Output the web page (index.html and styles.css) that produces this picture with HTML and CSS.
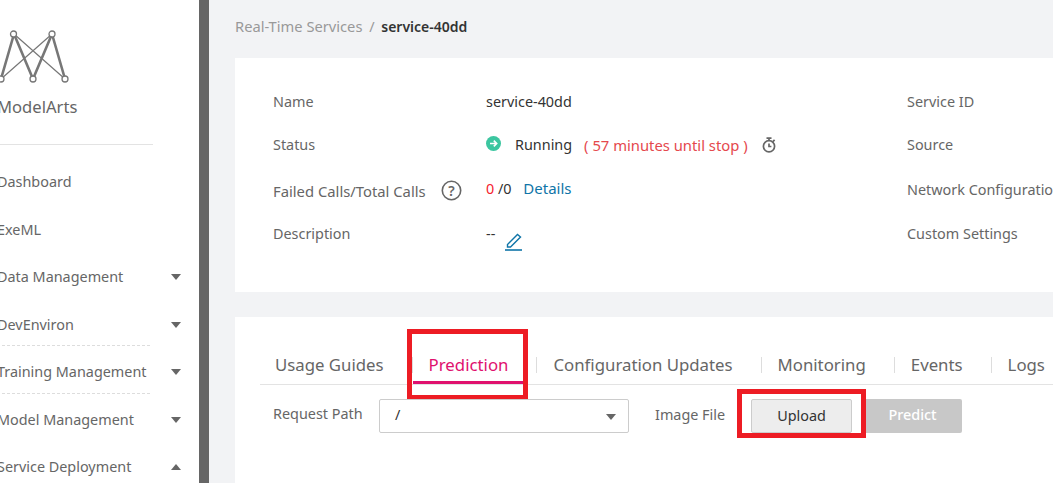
FILE: index.html
```html
<!DOCTYPE html>
<html>
  <head>
    <title>ModelArts - service-40dd</title>
    <link rel="stylesheet" href="styles.css">
  </head>

  <body>
    <aside class="sidebar">
      <div class="brand">
        <svg class="brand-logo" width="70" height="50" viewBox="0 0 70 50">
          <g fill="none" stroke="#777">
            <path stroke-width="1.2" d="M14 5 65 50M52 5 1 50" />
            <path stroke-width="2.6" d="M14 5 1 50M14 5 33 50M52 5 33 50M52 5 65 50" />
            <g stroke-width="1.3" fill="#fff">
              <circle cx="13.5" cy="5" r="3" />
              <circle cx="52" cy="5" r="3" />
              <circle cx="1" cy="50" r="3" />
              <circle cx="33" cy="50" r="3" />
              <circle cx="65" cy="50" r="3" />
            </g>
          </g>
        </svg>
        <div class="brand-name">ModelArts</div>
      </div>
      <ul class="nav">
        <li class="nav-item">Dashboard</li>
        <li class="nav-item">ExeML</li>
        <li class="nav-item">Data Management<span class="caret"></span></li>
        <li class="nav-item nav-item-dashed">DevEnviron<span class="caret"></span></li>
        <li class="nav-item nav-item-dashed">Training Management<span class="caret"></span></li>
        <li class="nav-item">Model Management<span class="caret"></span></li>
        <li class="nav-item">Service Deployment<span class="caret caret-up"></span></li>
      </ul>
    </aside>
    <div class="scrollbar"></div>

    <main class="content">
      <div class="breadcrumb">
        <span class="crumb">Real-Time Services</span>
        <span class="crumb-sep">/</span>
        <span class="crumb-current">service-40dd</span>
      </div>

      <section class="card info-card">
        <div class="info-grid">
          <span class="label">Name</span>
          <span class="value">service-40dd</span>
          <span class="label">Service ID</span>

          <span class="label">Status</span>
          <span class="value status">
            <svg class="status-icon" width="15" height="15" viewBox="0 0 15 15">
              <circle cx="7.5" cy="7.5" r="7.5" fill="#3cc6a0" />
              <path d="M4 7.5h6.5M7.8 4.6l2.9 2.9-2.9 2.9" fill="none" stroke="#fff" stroke-width="1.6" />
            </svg>
            <span>Running</span>
            <span class="countdown">( 57 minutes until stop )</span>
            <svg class="timer-icon" width="16" height="16" viewBox="0 0 16 16">
              <g fill="none" stroke="#666" stroke-width="1.7">
                <circle cx="8" cy="9.3" r="5.6" />
                <path d="M5.5 1.2h5M8 1.2v2.4M13.6 2.8l-1.7 1.8M8 6.5v3h2.4" />
              </g>
            </svg>
          </span>
          <span class="label">Source</span>

          <span class="label label-help">
            <span class="label-wide">Failed Calls/Total Calls</span>
            <svg width="21" height="21" viewBox="0 0 21 21">
              <circle cx="10.5" cy="10.5" r="9.2" fill="none" stroke="#666" stroke-width="1.6" />
              <text class="help-mark" x="10.5" y="15.5" text-anchor="middle">?</text>
            </svg>
          </span>
          <span class="value calls"><span class="zero">0</span> /0 <a class="link">Details</a></span>
          <span class="label">Network Configuration</span>

          <span class="label">Description</span>
          <span class="value desc">
            --
            <svg class="edit-icon" width="20" height="20" viewBox="0 0 20 20">
              <path d="M3.5 13.5 13.5 3.5l3 2.5L6.5 16H3.5z" fill="none" stroke="#0f75a8" stroke-width="1.4" />
              <path d="M1 19h17" stroke="#0f75a8" stroke-width="1.6" />
            </svg>
          </span>
          <span class="label">Custom Settings</span>
        </div>
      </section>

      <section class="card tabs-card">
        <div class="tabs">
          <span class="tab">Usage Guides</span>
          <span class="tab tab-active">Prediction</span>
          <span class="tab">Configuration Updates</span>
          <span class="tab">Monitoring</span>
          <span class="tab">Events</span>
          <span class="tab">Logs</span>
          <span class="mark mark-tab"></span>
        </div>
        <div class="form-row">
          <span class="label request-label">Request Path</span>
          <div class="select">
            <span class="select-text">/</span>
            <span class="caret"></span>
          </div>
          <span class="label image-label">Image File</span>
          <button class="btn btn-upload">Upload</button>
          <button class="btn btn-predict">Predict</button>
          <span class="mark mark-upload"></span>
        </div>
      </section>
    </main>
  </body>
</html>
```

FILE: styles.css
```css
:root {
  --text: #666;
  --text-dark: #333;
  --line: #e3e3e3;
}

html,
body {
  height: 100%;
  overflow: hidden;
}

body {
  margin: 0;
  display: flex;
  font-family: "Noto Sans", "Open Sans", sans-serif;
  font-size: 14.4px;
  color: var(--text);
  background-color: #fff;
}

/* sidebar */
.sidebar {
  width: 199px;
  flex-shrink: 0;
  overflow: hidden;
}

.brand {
  margin-right: 46px;
  padding-top: 29px;
  height: 115px;
  border-bottom: 1px solid var(--line);
}
.brand-logo {
  display: block;
  overflow: visible;
}
.brand-name {
  margin-top: 16px;
  margin-left: -3px;
  font-size: 16.6px;
  line-height: 24px;
}

.nav {
  list-style: none;
  margin: 13px 0 0 -3px;
  padding: 0;
}
.nav-item {
  position: relative;
  height: 47.5px;
  line-height: 47px;
  white-space: nowrap;
}
.nav-item-dashed::after {
  content: "";
  position: absolute;
  left: 0;
  right: 49px;
  bottom: 2px;
  border-bottom: 1px dashed #ddd;
}

.caret {
  position: absolute;
  left: 174px;
  top: 21px;
  border-left: 5px solid transparent;
  border-right: 5px solid transparent;
  border-top: 6px solid #666;
}
.caret-up {
  border-top: 0;
  border-bottom: 6px solid #666;
}

.scrollbar {
  width: 10px;
  flex-shrink: 0;
  background-color: #666;
}

/* main column */
.content {
  flex: 1;
  min-width: 0;
  padding-left: 26px;
  background-color: #f2f3f5;
}

.breadcrumb {
  height: 58px;
  line-height: 52px;
  white-space: nowrap;
  color: #999;
}
.crumb {
  font-size: 14.7px;
}
.crumb-sep {
  margin: 0 3px;
}
.crumb-current {
  font-size: 14px;
  font-weight: 600;
  color: var(--text-dark);
}

.card {
  background-color: #fff;
}

.info-card {
  box-sizing: border-box;
  height: 234px;
  margin-bottom: 25px;
  padding: 20px 0 0 38px;
  overflow: hidden;
}

.info-grid {
  display: grid;
  grid-template-columns: 213px 421px 300px;
  grid-template-rows: 47px 39px 51px 37px;
  align-items: center;
  white-space: nowrap;
}

.value {
  color: var(--text-dark);
}

.label-help {
  display: flex;
  align-items: center;
  gap: 15px;
  margin-top: 2px;
}
.label-wide {
  font-size: 14.8px;
}
.help-mark {
  font-size: 14px;
  font-weight: 600;
  fill: #666;
}

.status {
  display: flex;
  align-items: center;
}
.status-icon {
  margin: -2px 14px 0 0;
}
.countdown {
  margin-left: 12px;
  color: #e5484d;
  font-size: 14.8px;
}
.timer-icon {
  margin-left: 13px;
}

.calls {
  margin-top: -3px;
}
.zero {
  color: #f5222d;
}
.link {
  margin-left: 8px;
  color: #0f75a8;
  font-size: 15px;
}

.desc {
  display: flex;
  align-items: center;
  gap: 9px;
}
.edit-icon {
  margin-top: 14px;
}

.tabs-card {
  height: 166px;
  padding-left: 25px;
}

.tabs {
  position: relative;
  display: flex;
  box-sizing: border-box;
  height: 68px;
  border-bottom: 1px solid var(--line);
  white-space: nowrap;
  font-size: 16.8px;
  line-height: 96px;
}
.tab {
  position: relative;
  padding: 0 15px 0 16px;
  margin-left: 14px;
}
.tab:first-child {
  margin-left: 0;
  padding-left: 15px;
}
.tab + .tab::before {
  content: "";
  position: absolute;
  left: -1px;
  top: 40px;
  height: 16px;
  border-left: 1px solid #ddd;
}
.tab-active {
  color: #e0106e;
  border-bottom: 3px solid #e0106e;
}

.form-row {
  position: relative;
  display: flex;
  align-items: center;
  height: 62px;
  padding-left: 13px;
}
.request-label {
  width: 106px;
  margin-top: -5px;
}
.select {
  position: relative;
  display: flex;
  align-items: center;
  box-sizing: border-box;
  width: 250px;
  height: 34px;
  padding-left: 15px;
  border: 1px solid #ccc;
  border-radius: 2px;
  color: var(--text-dark);
}
.select-text {
  margin-top: -3px;
}
.select .caret {
  left: 226px;
  top: 14px;
}
.image-label {
  margin-left: 26px;
  width: 96px;
  margin-top: -4px;
}

.btn {
  height: 34px;
  width: 101px;
  padding: 0;
  border-radius: 2px;
  font: inherit;
}
.btn-upload {
  border: 1px solid #ccc;
  background-color: #ededed;
  color: var(--text-dark);
  padding-bottom: 2px;
}
.btn-predict {
  margin-left: 11px;
  width: 99px;
  border: 0;
  background-color: #c8c8c8;
  color: #fff;
  font-weight: 500;
  padding-bottom: 3px;
}

/* red annotation boxes drawn on top of the screenshot */
.mark {
  position: absolute;
  box-sizing: border-box;
  border: 5px solid #ed1c24;
}
.mark-tab {
  left: 147px;
  top: 12px;
  width: 121px;
  height: 71px;
}
.mark-upload {
  left: 477px;
  top: 4px;
  width: 129px;
  height: 49px;
}
```
